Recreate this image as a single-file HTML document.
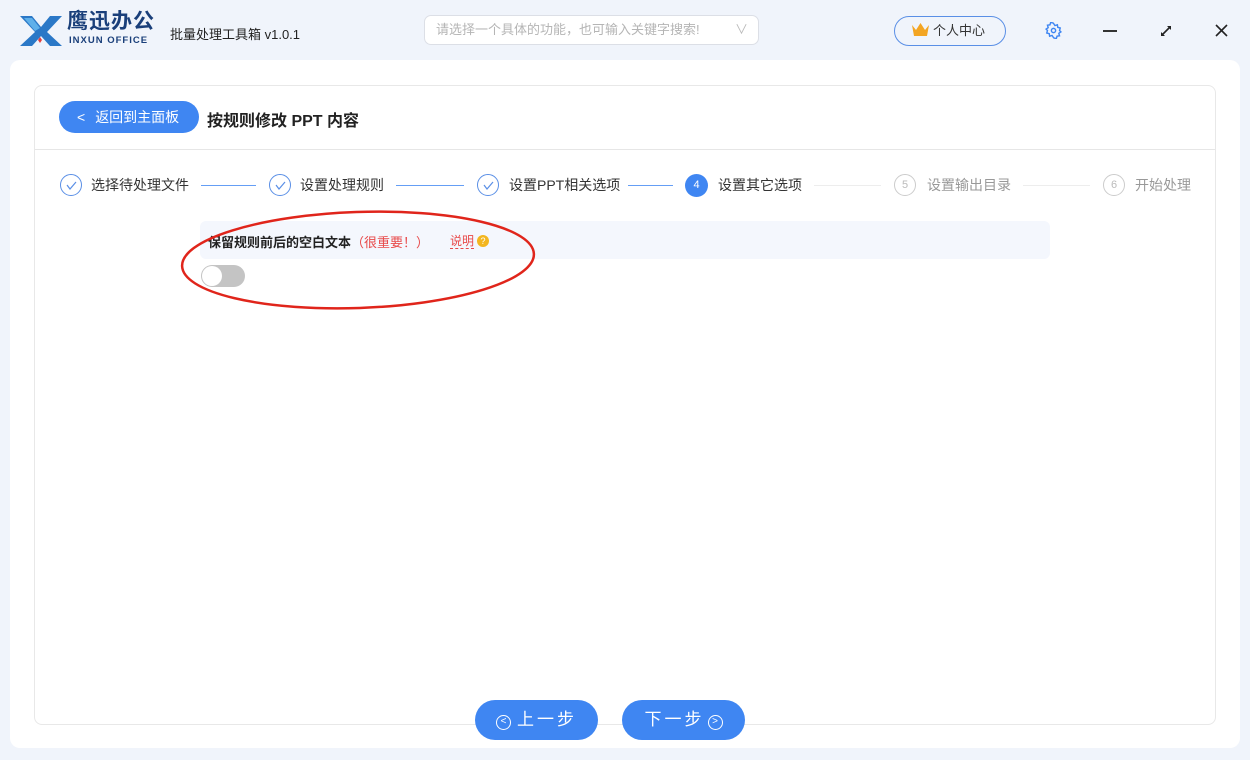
<!DOCTYPE html>
<html><head><meta charset="utf-8">
<style>
*{margin:0;padding:0;box-sizing:border-box}
body{width:1250px;height:760px;background:#f0f4fb;font-family:"Liberation Sans","Noto Sans CJK SC",sans-serif;position:relative;overflow:hidden;color:#333}
.abs{position:absolute}
.panel{left:10px;top:60px;width:1230px;height:688px;background:#fff;border-radius:10px}
.card{left:34px;top:85px;width:1182px;height:640px;border:1px solid #e8e8e8;border-radius:8px;background:#fff}
.div{left:35px;top:149px;width:1180px;height:1px;background:#e6e6e6}
.back{left:59px;top:101px;width:140px;height:32px;background:#3f86f2;border-radius:16px;color:#fff;font-size:14px;line-height:32px}
.step{font-size:14px;color:#333;top:176px;line-height:18px}
.ci{width:22px;height:22px;border:1px solid #5a8fe6;border-radius:50%;top:174px}
.ln{height:1px;top:185px;background:#3f86f2;opacity:.8}
.btn{top:700px;width:123px;height:40px;background:#3f86f2;border-radius:20px;color:#fff;font-size:17px;line-height:40px;text-align:center;letter-spacing:3px}
</style></head><body>
<svg class="abs" style="left:18px;top:12px" width="46" height="36" viewBox="0 0 46 36">
<path d="M2 4 L14 4 L23 15 L32 4 L44 4 L29 20 L44 34 L32 34 L23 24 L14 34 L2 34 L17 20 Z" fill="#2b78c7"/>
<path d="M6 6 L14 6 L22 16 L17 19 Z" fill="#5fb0ea"/>
<path d="M20 28 l2 -3 l2 3 l-2 3z" fill="#e43d3d"/>
</svg>
<div class="abs" style="left:67px;top:10px;font-size:21px;line-height:24px;font-weight:bold;color:#1a3f7a;letter-spacing:1px">鹰迅办公</div>
<div class="abs" style="left:69px;top:35px;font-size:9.5px;line-height:11px;font-weight:bold;color:#1a3f7a;letter-spacing:1px">INXUN OFFICE</div>
<div class="abs" style="left:170px;top:24px;font-size:13px;color:#222">批量处理工具箱 v1.0.1</div>
<div class="abs" style="left:424px;top:15px;width:335px;height:30px;border:1px solid #dcdfe6;border-radius:7px;background:#fff;font-size:13px;color:#b5b5b5;line-height:28px;padding-left:11px">请选择一个具体的功能，也可输入关键字搜索!<span style="position:absolute;right:10px;color:#bbb">∨</span></div>
<div class="abs" style="left:894px;top:16px;width:112px;height:30px;border:1px solid #5a8fe6;border-radius:15px;font-size:13px;color:#333;line-height:28px;padding-left:38px">个人中心</div>
<svg class="abs" style="left:911px;top:22px" width="19" height="16" viewBox="0 0 19 16"><path d="M1 3 L5 8 L9.5 1 L14 8 L18 3 L16 14 L3 14Z" fill="#f3a523"/></svg>
<svg class="abs" style="left:1045px;top:22px" width="17" height="17" viewBox="0 0 24 24" fill="none" stroke="#3f86f2" stroke-width="2"><circle cx="12" cy="12" r="3"/><path d="M12 2l2 3 3.5-1 .5 3.5 3.5 1-1 3.5 2 2-3 2 1 3.5-3.5.5-1 3.5-3.5-1L12 22l-2-3-3.5 1-.5-3.5-3.5-1 1-3.5-2-2 3-2-1-3.5 3.5-.5 1-3.5 3.5 1z"/></svg>
<div class="abs" style="left:1103px;top:30px;width:14px;height:2px;background:#333"></div>
<svg class="abs" style="left:1159px;top:24px" width="14" height="14" viewBox="0 0 14 14" stroke="#222" stroke-width="1.6" fill="#222"><line x1="3" y1="11" x2="11" y2="3"/><path d="M8 2h4v4z" stroke="none"/><path d="M2 8v4h4z" stroke="none"/></svg>
<svg class="abs" style="left:1215px;top:24px" width="13" height="13" viewBox="0 0 13 13" stroke="#222" stroke-width="1.6"><line x1="1" y1="1" x2="12" y2="12"/><line x1="12" y1="1" x2="1" y2="12"/></svg>

<div class="abs panel"></div>
<div class="abs card"></div>
<div class="abs div"></div>
<div class="abs back"><span style="margin-left:18px;margin-right:10px">&lt;</span>返回到主面板</div>
<div class="abs" style="left:207px;top:107px;font-size:16px;font-weight:bold;color:#222">按规则修改 PPT 内容</div>

<div class="abs ci" style="left:60px"></div><svg class="abs" style="left:66px;top:181px" width="11" height="9"><path d="M1 4 L4 8 L10 1" fill="none" stroke="#5a8fe6" stroke-width="1.2"/></svg>
<div class="abs step" style="left:91px">选择待处理文件</div>
<div class="abs ln" style="left:201px;width:55px"></div>
<div class="abs ci" style="left:269px"></div><svg class="abs" style="left:275px;top:181px" width="11" height="9"><path d="M1 4 L4 8 L10 1" fill="none" stroke="#5a8fe6" stroke-width="1.2"/></svg>
<div class="abs step" style="left:300px">设置处理规则</div>
<div class="abs ln" style="left:396px;width:68px"></div>
<div class="abs ci" style="left:477px"></div><svg class="abs" style="left:483px;top:181px" width="11" height="9"><path d="M1 4 L4 8 L10 1" fill="none" stroke="#5a8fe6" stroke-width="1.2"/></svg>
<div class="abs step" style="left:509px">设置PPT相关选项</div>
<div class="abs ln" style="left:628px;width:45px"></div>
<div class="abs" style="left:685px;top:174px;width:23px;height:23px;border-radius:50%;background:#3f86f2;color:#fff;font-size:11px;text-align:center;line-height:23px">4</div>
<div class="abs step" style="left:718px">设置其它选项</div>
<div class="abs ln" style="left:814px;width:67px;background:#e8e8e8"></div>
<div class="abs ci" style="left:894px;border-color:#ccc;color:#bbb;font-size:11px;text-align:center;line-height:20px">5</div>
<div class="abs step" style="left:927px;color:#999">设置输出目录</div>
<div class="abs ln" style="left:1023px;width:67px;background:#e8e8e8"></div>
<div class="abs ci" style="left:1103px;border-color:#ccc;color:#bbb;font-size:11px;text-align:center;line-height:20px">6</div>
<div class="abs step" style="left:1135px;color:#999">开始处理</div>

<div class="abs" style="left:200px;top:221px;width:850px;height:38px;background:#f4f7fd;border-radius:6px"></div>
<div class="abs" style="left:208px;top:232px;font-size:13px;font-weight:bold;color:#222">保留规则前后的空白文本<span style="color:#e84a4a;font-weight:normal">（很重要！）</span></div>
<div class="abs" style="left:450px;top:234px;font-size:12px;color:#e84a4a;border-bottom:1px dashed #e84a4a;line-height:14px">说明</div>
<div class="abs" style="left:477px;top:235px;width:12px;height:12px;border-radius:50%;background:#f3b61f;color:#fff;font-size:9px;text-align:center;line-height:12px">?</div>
<div class="abs" style="left:201px;top:265px;width:44px;height:22px;border-radius:11px;background:#c4c4c4"></div>
<div class="abs" style="left:202px;top:266px;width:20px;height:20px;border-radius:50%;background:#fff"></div>
<svg class="abs" style="left:170px;top:200px" width="380" height="120"><ellipse cx="188" cy="60" rx="176" ry="48" transform="rotate(-2 188 60)" fill="none" stroke="#e0251b" stroke-width="2.5"/></svg>

<div class="abs btn" style="left:475px"><span style="display:inline-block;width:15px;height:15px;border:1.5px solid #fff;border-radius:50%;font-size:10px;line-height:12px;vertical-align:1px;letter-spacing:0;margin-right:6px">&lt;</span>上一步</div>
<div class="abs btn" style="left:622px">下一步<span style="display:inline-block;width:15px;height:15px;border:1.5px solid #fff;border-radius:50%;font-size:10px;line-height:12px;vertical-align:1px;letter-spacing:0;margin-left:3px">&gt;</span></div>
</body></html>
